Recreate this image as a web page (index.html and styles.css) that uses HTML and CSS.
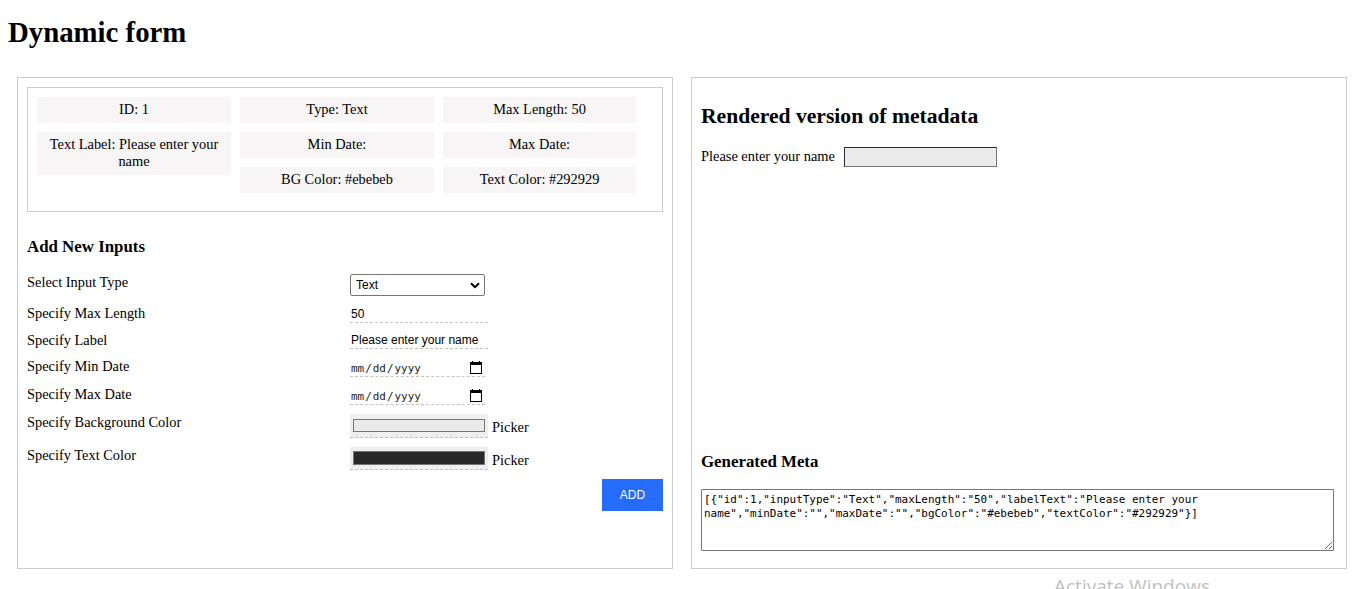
FILE: index.html
```html
<!DOCTYPE html>
<html lang="en">
<head>
<meta charset="utf-8">
<title>Dynamic form</title>
<link rel="stylesheet" href="styles.css">
</head>
<body>
<h1 class="title">Dynamic form</h1>
<main class="panels">
  <section class="panel">
    <div class="summary">
      <div class="summary-col">
        <div class="cell">ID: 1</div>
        <div class="cell">Text Label: Please enter your name</div>
      </div>
      <div class="summary-col">
        <div class="cell">Type: Text</div>
        <div class="cell">Min Date:</div>
        <div class="cell">BG Color: #ebebeb</div>
      </div>
      <div class="summary-col">
        <div class="cell">Max Length: 50</div>
        <div class="cell">Max Date:</div>
        <div class="cell">Text Color: #292929</div>
      </div>
    </div>
    <h3 class="subhead">Add New Inputs</h3>
    <form class="fields">
      <label class="label">Select Input Type</label>
      <div class="select"><span>Text</span>
        <svg width="10" height="7" viewBox="0 0 10 7"><path d="M1 1.2 5 5.2 9 1.2" fill="none" stroke="#000" stroke-width="2"/></svg>
      </div>
      <label class="label">Specify Max Length</label>
      <input class="text-input" type="text" value="50">
      <label class="label">Specify Label</label>
      <input class="text-input short" type="text" value="Please enter your name">
      <label class="label">Specify Min Date</label>
      <div class="date"><span class="part">mm</span><span class="slash">/</span><span class="part">dd</span><span class="slash">/</span><span class="part">yyyy</span>
        <svg class="calendar" width="12" height="13" viewBox="0 0 12 13"><path d="M2 0h1v1h6V0h1v1h2v12H0V1h2zM1 4v8h10V4z" fill="#000" fill-rule="evenodd"/></svg>
      </div>
      <label class="label">Specify Max Date</label>
      <div class="date"><span class="part">mm</span><span class="slash">/</span><span class="part">dd</span><span class="slash">/</span><span class="part">yyyy</span>
        <svg class="calendar" width="12" height="13" viewBox="0 0 12 13"><path d="M2 0h1v1h6V0h1v1h2v12H0V1h2zM1 4v8h10V4z" fill="#000" fill-rule="evenodd"/></svg>
      </div>
      <label class="label">Specify Background Color</label>
      <div class="picker"><div class="color"><div class="swatch light"></div></div><span class="picker-text">Picker</span></div>
      <label class="label">Specify Text Color</label>
      <div class="picker"><div class="color dark-box"><div class="swatch dark"></div></div><span class="picker-text">Picker</span></div>
    </form>
    <button class="add" type="button">ADD</button>
  </section>
  <section class="panel output">
    <h2 class="heading">Rendered version of metadata</h2>
    <div class="rendered"><label class="preview-label">Please enter your name</label><input class="preview" type="text"></div>
    <h3 class="subhead meta-title">Generated Meta</h3>
    <textarea class="meta" spellcheck="false">[{"id":1,"inputType":"Text","maxLength":"50","labelText":"Please enter your name","minDate":"","maxDate":"","bgColor":"#ebebeb","textColor":"#292929"}]</textarea>
  </section>
</main>
<div class="watermark">Activate Windows</div>
</body>
</html>
```

FILE: styles.css
```css
* { box-sizing: border-box; }
html { height: 100%; overflow: hidden; }
body {
  position: relative;
  height: 589px;
  margin: 0;
  overflow: hidden;
  background: #fff;
  color: #000;
  font: 14.4px/17px "Liberation Serif", "Times New Roman", serif;
}
.title { margin: 0; padding: 15px 8px 0; height: 77px; font-size: 28.8px; line-height: 34px; }
.panels { display: flex; gap: 18px; padding-left: 17px; }
.panel {
  display: flex;
  flex-direction: column;
  width: 656px;
  height: 492px;
  padding: 9px;
  border: 1px solid #ccc;
}
.summary { display: flex; gap: 9px; height: 125px; padding: 9px; border: 1px solid #ccc; }
.summary-col { display: flex; flex-direction: column; gap: 9px; width: 194px; }
.summary-col:last-child { width: 193px; }
.cell { padding: 4px 9px 5px; background: #f7f5f6; text-align: center; }
.subhead { margin: 26px 0 0; font-size: 16.85px; line-height: 18px; }
.fields {
  display: grid;
  grid-template-columns: 323px 1fr;
  grid-template-rows: 31px 27px 26px 28px 28px 33px 32px;
  align-items: start;
  margin-top: 18px;
}
.select {
  display: flex;
  align-items: center;
  justify-content: space-between;
  width: 135px;
  height: 22px;
  padding: 0 4px 0 5px;
  border: 1px solid #767676;
  border-radius: 2px;
  font: 12px/20px "Liberation Sans", Arial, sans-serif;
}
.text-input {
  width: 138px;
  height: 18px;
  padding: 0 1px;
  border: 0;
  border-bottom: 1px dashed #c4c4c4;
  outline: 0;
  font: 12px/17px "Liberation Sans", Arial, sans-serif;
}
.text-input.short { height: 17px; padding-top: 1px; }
.date {
  display: flex;
  align-items: center;
  width: 135px;
  height: 19px;
  padding: 1px 3px 0 1px;
  border-bottom: 1px dashed #c4c4c4;
  font: 10.95px/17px "DejaVu Sans Mono", monospace;
  color: #222;
}
.part { padding-top: 1px; }
.slash { width: 8.6px; padding-top: 1px; text-align: center; }
.calendar { margin: 0 0 1px auto; }
.picker { display: flex; gap: 4px; }
.color { width: 138px; height: 24px; padding: 5px 3px; background: #efefef; border-bottom: 1px dashed #c4c4c4; }
.color.dark-box { height: 23px; padding-top: 4px; }
.swatch { height: 13px; border: 1px solid #767676; }
.light { background: #ebebeb; }
.dark { height: 14px; background: #292929; }
.picker-text { padding-top: 5px; }
.add {
  align-self: flex-end;
  width: 61px;
  height: 32px;
  padding: 0;
  border: 0;
  background: #266dff;
  color: #fff;
  font: 12px "Liberation Sans", Arial, sans-serif;
}
.heading { margin: 17px 0 0; font-size: 21.6px; line-height: 25px; }
.rendered { display: flex; gap: 9px; height: 20px; margin-top: 18px; }
.preview-label { padding-top: 1px; }
.preview { width: 153px; height: 20px; padding: 0; border: 1px solid; border-color: #292929 #767676 #767676 #292929; background: #ebebeb; }
.meta-title { margin-top: 286px; }
.meta {
  width: 633px;
  height: 62px;
  margin: 18px 0 0;
  padding: 3px 2px 2px;
  border: 1px solid #767676;
  border-radius: 1px;
  font: 10.95px/14px "DejaVu Sans Mono", monospace;
}
.watermark {
  position: absolute;
  left: 1054px;
  top: 573px;
  color: #c0c0c0;
  font: 19px/26px "Open Sans", sans-serif;
  white-space: nowrap;
}
```
